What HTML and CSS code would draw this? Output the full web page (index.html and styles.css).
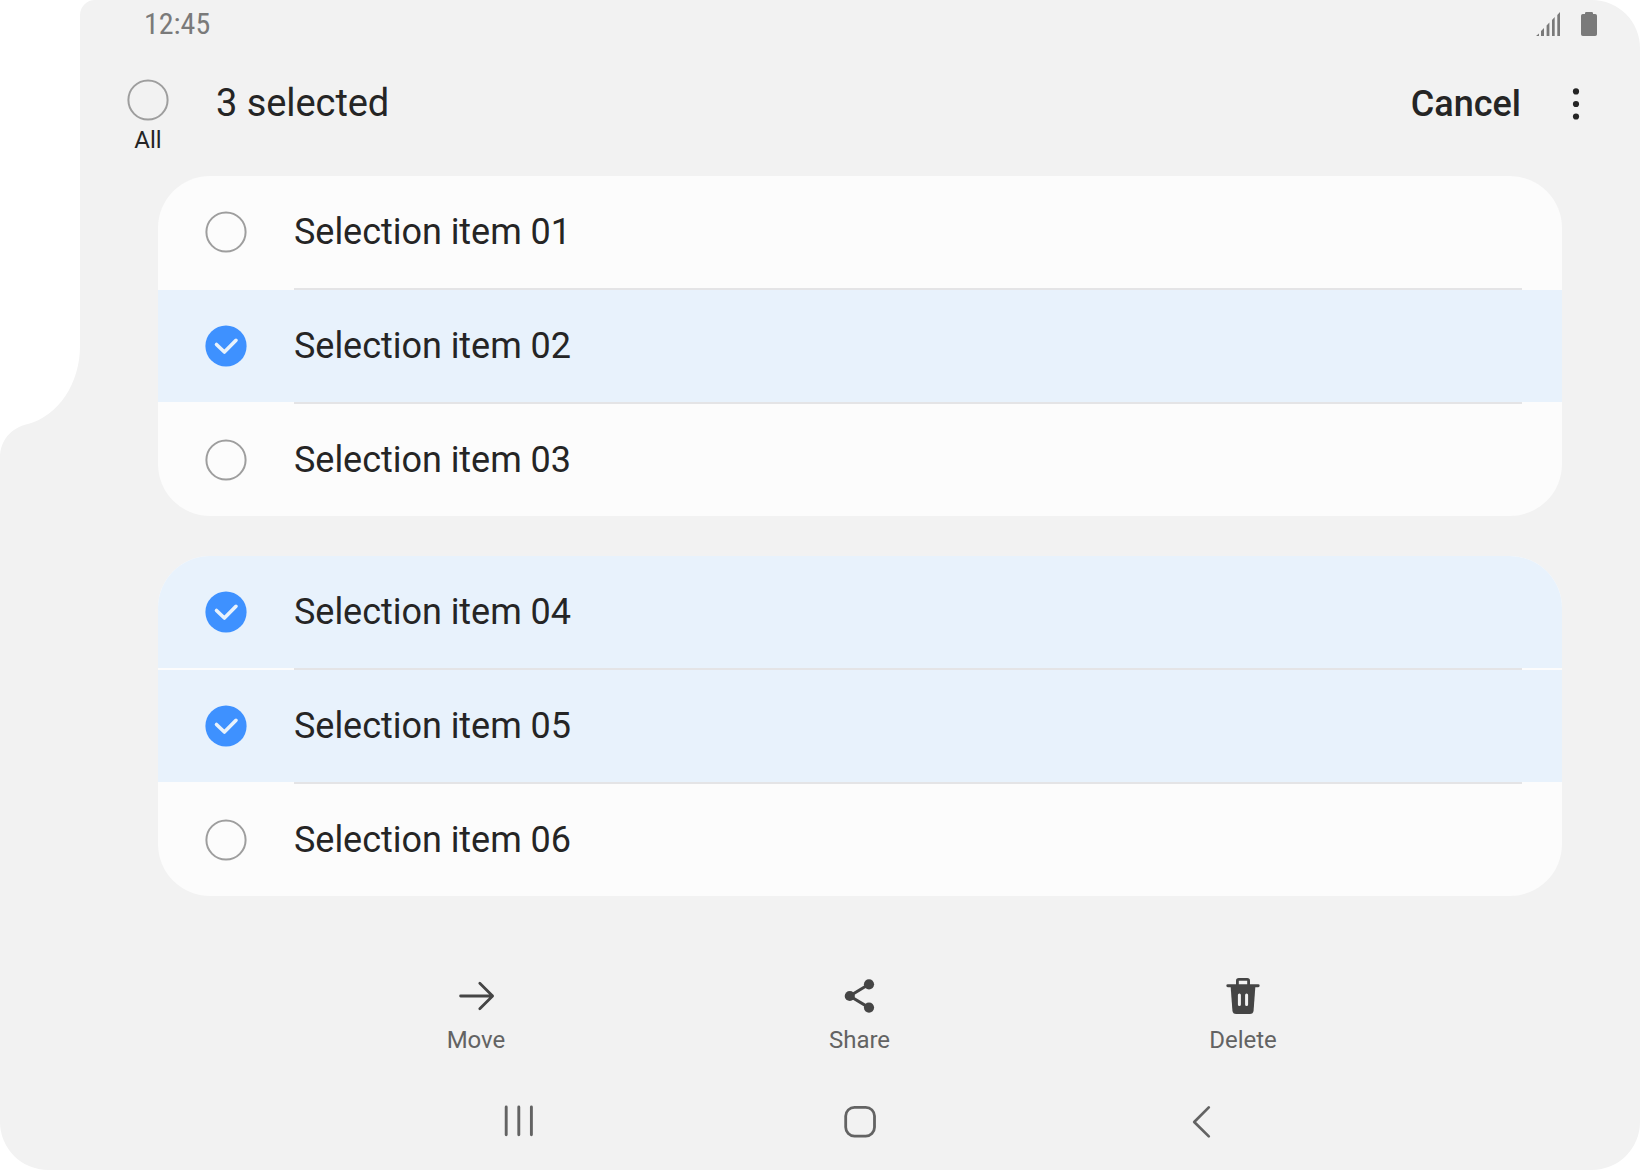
FILE: index.html
```html
<!DOCTYPE html>
<html lang="en">
<head>
<meta charset="utf-8">
<title>Selection</title>
<link rel="stylesheet" href="styles.css">
</head>
<body>
<svg class="defs" width="0" height="0" aria-hidden="true">
  <symbol id="off" viewBox="0 0 42 42"><circle cx="21" cy="21" r="19.6" fill="none" stroke="#9e9e9e" stroke-width="2"/></symbol>
  <symbol id="on" viewBox="0 0 42 42"><circle cx="21" cy="21" r="20.6" fill="#3e91ff"/><path d="M11.5 19.5 19.4 27 31 15.3" fill="none" stroke="#e8f2fc" stroke-width="3.6" stroke-linecap="round" stroke-linejoin="round"/></symbol>
</svg>
<main class="screen">
  <div class="status">
    <span class="time">12:45</span>
    <svg class="signal" width="24" height="24" viewBox="0 0 24 24"><path d="M0 24 3 21.5V24zM5 24V19L8 16V24zM10.6 24V13.5L13.4 10.5V24zM16 24V8L18.7 5V24zM21.3 24V3L24 0V24z" fill="#7a7a7a"/></svg>
    <svg class="battery" width="16" height="24" viewBox="0 0 16 24"><path d="M4 2V1.2Q4 0 5.2 0h5.6Q12 0 12 1.2V2h2.2Q16 2 16 3.8v18.4Q16 24 14.2 24H1.8Q0 24 0 22.2V3.8Q0 2 1.8 2z" fill="#7a7a7a"/></svg>
  </div>
  <header class="header">
    <div class="all"><svg class="mark"><use href="#off"/></svg><span>All</span></div>
    <h1 class="title">3 selected</h1>
    <span class="cancel">Cancel</span>
    <svg class="more" width="8" height="34" viewBox="0 0 8 34"><g fill="#252525"><circle cx="4" cy="4.4" r="3.1"/><circle cx="4" cy="17" r="3.1"/><circle cx="4" cy="29.5" r="3.1"/></g></svg>
  </header>
  <ul class="card">
    <li class="row"><svg class="mark"><use href="#off"/></svg><span>Selection item 01</span></li>
    <li class="line"></li>
    <li class="row selected"><svg class="mark"><use href="#on"/></svg><span>Selection item 02</span></li>
    <li class="line"></li>
    <li class="row"><svg class="mark"><use href="#off"/></svg><span>Selection item 03</span></li>
  </ul>
  <ul class="card">
    <li class="row selected"><svg class="mark"><use href="#on"/></svg><span>Selection item 04</span></li>
    <li class="line"></li>
    <li class="row selected"><svg class="mark"><use href="#on"/></svg><span>Selection item 05</span></li>
    <li class="line"></li>
    <li class="row"><svg class="mark"><use href="#off"/></svg><span>Selection item 06</span></li>
  </ul>
  <div class="actions">
    <div class="action">
      <svg width="40" height="40" viewBox="0 0 40 40"><path d="M4.6 20H36.5M23.8 7.2 36.6 20 23.8 32.8" fill="none" stroke="#454545" stroke-width="2.8" stroke-linecap="round" stroke-linejoin="round"/></svg>
      <span>Move</span>
    </div>
    <div class="action">
      <svg width="40" height="40" viewBox="0 0 40 40"><path d="M29 8.3 9.7 20 29 31.6" fill="none" stroke="#454545" stroke-width="3"/><g fill="#454545"><circle cx="29" cy="8.3" r="5.1"/><circle cx="9.8" cy="20" r="5.1"/><circle cx="29" cy="31.6" r="5.1"/></g></svg>
      <span>Share</span>
    </div>
    <div class="action">
      <svg width="40" height="40" viewBox="0 0 40 40"><path d="M14.4 9V4.8Q14.4 3.4 15.8 3.4H24.2Q25.6 3.4 25.6 4.8V9" fill="none" stroke="#454545" stroke-width="2.8"/><path d="M4.8 9.7H35.2" stroke="#454545" stroke-width="2.9" stroke-linecap="round"/><path d="M7.6 10H32.4L30.6 34.5Q30.3 38 26.8 38H13.2Q9.7 38 9.4 34.5z" fill="#454545"/><path d="M16.4 19V28.6M23.6 19V28.6" stroke="#f2f2f2" stroke-width="3" stroke-linecap="round"/></svg>
      <span>Delete</span>
    </div>
  </div>
  <nav class="nav">
    <svg width="40" height="40" viewBox="0 0 40 40"><path d="M7.2 7V34.7M19.8 7V34.7M32.4 7V34.7" stroke="#636363" stroke-width="2.9" stroke-linecap="round"/></svg>
    <svg width="40" height="40" viewBox="0 0 40 40"><rect x="5.7" y="7.3" width="28.8" height="28.8" rx="8.8" fill="none" stroke="#636363" stroke-width="2.8"/></svg>
    <svg width="40" height="40" viewBox="0 0 40 40"><path d="M27.8 7.4 13.2 22 27.8 36.4" fill="none" stroke="#636363" stroke-width="2.7" stroke-linecap="round" stroke-linejoin="round"/></svg>
  </nav>
</main>
</body>
</html>
```
FILE: styles.css
```css
* { box-sizing: border-box; }

body {
  margin: 0;
  background: #fff;
  color: #252525;
  font-family: Roboto, "Liberation Sans", sans-serif;
}

svg { display: block; flex: none; }
.defs { position: absolute; }

.screen {
  width: 1640px;
  height: 1170px;
  overflow: hidden;
  display: flex;
  flex-direction: column;
  background: #f2f2f2;
  clip-path: path("M95 0H1592A48 48 0 0 1 1640 48V1122A48 48 0 0 1 1592 1170H48A48 48 0 0 1 0 1122V458C0 440 11 428 28 424C58 416 80 384 80 346V15A15 15 0 0 1 95 0Z");
}

.status {
  height: 48px;
  display: flex;
  align-items: center;
  padding: 0 43px 0 144px;
  color: #7a7a7a;
}

.time {
  margin-right: auto;
  font-size: 30px;
  font-stretch: 75%;
  line-height: 48px;
}

.signal { margin-right: 21px; }

.header {
  height: 128px;
  display: flex;
  padding: 0 60px 0 127px;
}

.mark { width: 42px; height: 42px; flex: none; }

.all {
  width: 42px;
  padding-top: 31px;
  display: flex;
  flex-direction: column;
  align-items: center;
  font-size: 24px;
  line-height: 38px;
}

.title {
  margin: 31px auto 0 47px;
  font-size: 38px;
  font-weight: 400;
  line-height: 48px;
  letter-spacing: -0.06px;
}

.cancel {
  margin-top: 32px;
  font-size: 36px;
  font-weight: 500;
  line-height: 48px;
}

.more { margin: 39px 0 0 51px; }

.card {
  width: 1404px;
  margin: 0 0 40px 158px;
  padding: 0;
  border-radius: 52px;
  overflow: hidden;
  list-style: none;
  background: #fcfcfc;
  flex: none;
}

.row {
  height: 112px;
  display: flex;
  align-items: center;
  gap: 47px;
  padding-left: 47px;
  font-size: 36px;
  line-height: 48px;
  letter-spacing: -0.04px;
}

.selected { background: #e8f2fc; }

.line {
  height: 2px;
  margin: 0 40px 0 136px;
  background: #e4e4e6;
}

.actions {
  display: grid;
  grid-template-columns: repeat(3, 383.5px);
  justify-content: center;
  margin-top: 40px;
  height: 104px;
  padding-left: 79px;
}

.action {
  display: flex;
  flex-direction: column;
  align-items: center;
  gap: 8px;
  color: #636363;
  font-size: 24px;
  line-height: 32px;
}

.nav {
  display: grid;
  grid-template-columns: repeat(3, 341px);
  justify-content: center;
  justify-items: center;
  margin-top: 20px;
  padding-left: 80px;
}
```
